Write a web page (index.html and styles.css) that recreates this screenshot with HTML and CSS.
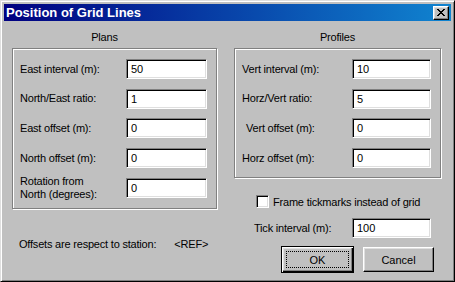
FILE: index.html
```html
<!DOCTYPE html>
<html>
<head>
<meta charset="utf-8">
<link rel="stylesheet" href="styles.css">
</head>
<body>
<div class="window">
  <div class="titlebar">
    <span class="title">Position of Grid Lines</span>
    <button class="close" aria-label="Close">
      <svg width="8" height="7" viewBox="0 0 8 7" shape-rendering="crispEdges">
        <path d="M0 0h2v1h-2zM6 0h2v1h-2zM1 1h2v1h-2zM5 1h2v1h-2zM2 2h4v1h-4zM3 3h2v1h-2zM2 4h4v1h-4zM1 5h2v1h-2zM5 5h2v1h-2zM0 6h2v1h-2zM6 6h2v1h-2z" fill="#000"/>
      </svg>
    </button>
  </div>
  <div class="content">
    <div class="col col-left">
      <div class="caption caption-plans">Plans</div>
      <div class="group plans">
        <div class="row"><span class="lbl">East interval (m):</span><span class="field">50</span></div>
        <div class="row"><span class="lbl">North/East ratio:</span><span class="field">1</span></div>
        <div class="row"><span class="lbl">East offset (m):</span><span class="field">0</span></div>
        <div class="row"><span class="lbl">North offset (m):</span><span class="field">0</span></div>
        <div class="row"><span class="lbl two">Rotation from<br>North (degrees):</span><span class="field">0</span></div>
      </div>
      <div class="note">Offsets are respect to station:<span class="ref">&lt;REF&gt;</span></div>
    </div>
    <div class="col col-right">
      <div class="caption">Profiles</div>
      <div class="group profiles">
        <div class="row"><span class="lbl">Vert interval (m):</span><span class="field">10</span></div>
        <div class="row"><span class="lbl">Horz/Vert ratio:</span><span class="field">5</span></div>
        <div class="row"><span class="lbl indent">Vert offset (m):</span><span class="field">0</span></div>
        <div class="row"><span class="lbl">Horz offset (m):</span><span class="field">0</span></div>
      </div>
      <div class="check"><span class="checkbox"></span><span>Frame tickmarks instead of grid</span></div>
      <div class="row tick"><span class="lbl">Tick interval (m):</span><span class="field">100</span></div>
      <div class="buttons">
        <button class="btn default"><span class="focus">OK</span></button>
        <button class="btn">Cancel</button>
      </div>
    </div>
  </div>
</div>
</body>
</html>
```
FILE: styles.css
```css
* { box-sizing: border-box; }
html, body { margin: 0; padding: 0; background: #c0c0c0; }
body {
  font-family: "Liberation Sans", Arial, sans-serif;
  font-size: 11px;
  letter-spacing: -0.2px;
  color: #000;
}
.window {
  width: 455px;
  height: 282px;
  background: #c0c0c0;
  border: 1px solid;
  border-color: #dfdfdf #000 #000 #dfdfdf;
  box-shadow: inset 1px 1px 0 #fff, inset -1px -1px 0 #808080;
  padding: 3px;
  display: flex;
  flex-direction: column;
}
.titlebar {
  height: 17px;
  background: linear-gradient(to right, #000080, #1084d0);
  display: flex;
  align-items: center;
  justify-content: space-between;
  padding: 0 2px 0 2px;
}
.title {
  color: #fff;
  font-weight: bold;
  font-size: 13px;
  line-height: 15px;
  letter-spacing: 0;
}
.close {
  width: 16px;
  height: 14px;
  padding: 0;
  margin: 0;
  background: #c0c0c0;
  border: 1px solid;
  border-color: #fff #000 #000 #fff;
  box-shadow: inset -1px -1px 0 #808080, inset 1px 1px 0 #dfdfdf;
  display: flex;
  align-items: center;
  justify-content: center;
}
.close svg { display: block; }
.content {
  display: flex;
  padding: 9px 10px 0 8px;
  gap: 17px;
}
.col { display: flex; flex-direction: column; }
.col-left { width: 205px; }
.col-right { width: 207px; }
.caption {
  height: 14px;
  line-height: 14px;
  text-align: center;
  margin-bottom: 4px;
}
.caption-plans { padding-right: 20px; }
.group {
  border: 1px solid #808080;
  box-shadow: inset 1px 1px 0 #fff, 1px 1px 0 #fff;
  display: flex;
  flex-direction: column;
  padding: 10px 9px 10px 7px;
}
.profiles { gap: 9.7px; padding-bottom: 9px; }
.plans { gap: 9.7px; }
.row {
  display: flex;
  align-items: center;
  justify-content: space-between;
  height: 20px;
}
.lbl { line-height: 13px; white-space: nowrap; }
.lbl.indent { padding-left: 4px; }
.field {
  height: 20px;
  background: #fff;
  border: 1px solid;
  border-color: #808080 #fff #fff #808080;
  box-shadow: inset 1px 1px 0 #000, inset -1px -1px 0 #dfdfdf;
  padding: 0 4px;
  line-height: 18px;
  letter-spacing: 0;
}
.plans .field { width: 81px; }
.profiles .field, .tick .field { width: 79px; }
.note {
  margin-top: 29px;
  padding-left: 7px;
  line-height: 13px;
  white-space: nowrap;
}
.ref { margin-left: 18px; }
.check {
  display: flex;
  align-items: center;
  gap: 4px;
  margin-top: 17px;
  padding-left: 22px;
  height: 13px;
}
.checkbox {
  width: 13px;
  height: 13px;
  background: #fff;
  border: 1px solid;
  border-color: #808080 #fff #fff #808080;
  box-shadow: inset 1px 1px 0 #000, inset -1px -1px 0 #dfdfdf;
}
.tick {
  margin-top: 10px;
  padding: 0 10px 0 20px;
}
.buttons {
  display: flex;
  justify-content: flex-end;
  gap: 9px;
  margin-top: 8px;
  padding-right: 7px;
  align-items: center;
}
.btn {
  width: 71px;
  height: 25px;
  padding: 0;
  margin: 0;
  font-family: "Liberation Sans", Arial, sans-serif;
  font-size: 11px;
  color: #000;
  background: #c0c0c0;
  border: 1px solid;
  border-color: #fff #000 #000 #fff;
  box-shadow: inset -1px -1px 0 #808080, inset 1px 1px 0 #dfdfdf;
}
.btn.default {
  width: 73px;
  height: 27px;
  outline: none;
  border: 1px solid #000;
  box-shadow: inset 1px 1px 0 #fff, inset -1px -1px 0 #000, inset -2px -2px 0 #808080, inset 2px 2px 0 #dfdfdf;
  padding: 4px;
  display: flex;
}
.focus {
  flex: 1;
  border: 1px dotted #000;
  display: flex;
  align-items: center;
  justify-content: center;
}
```
